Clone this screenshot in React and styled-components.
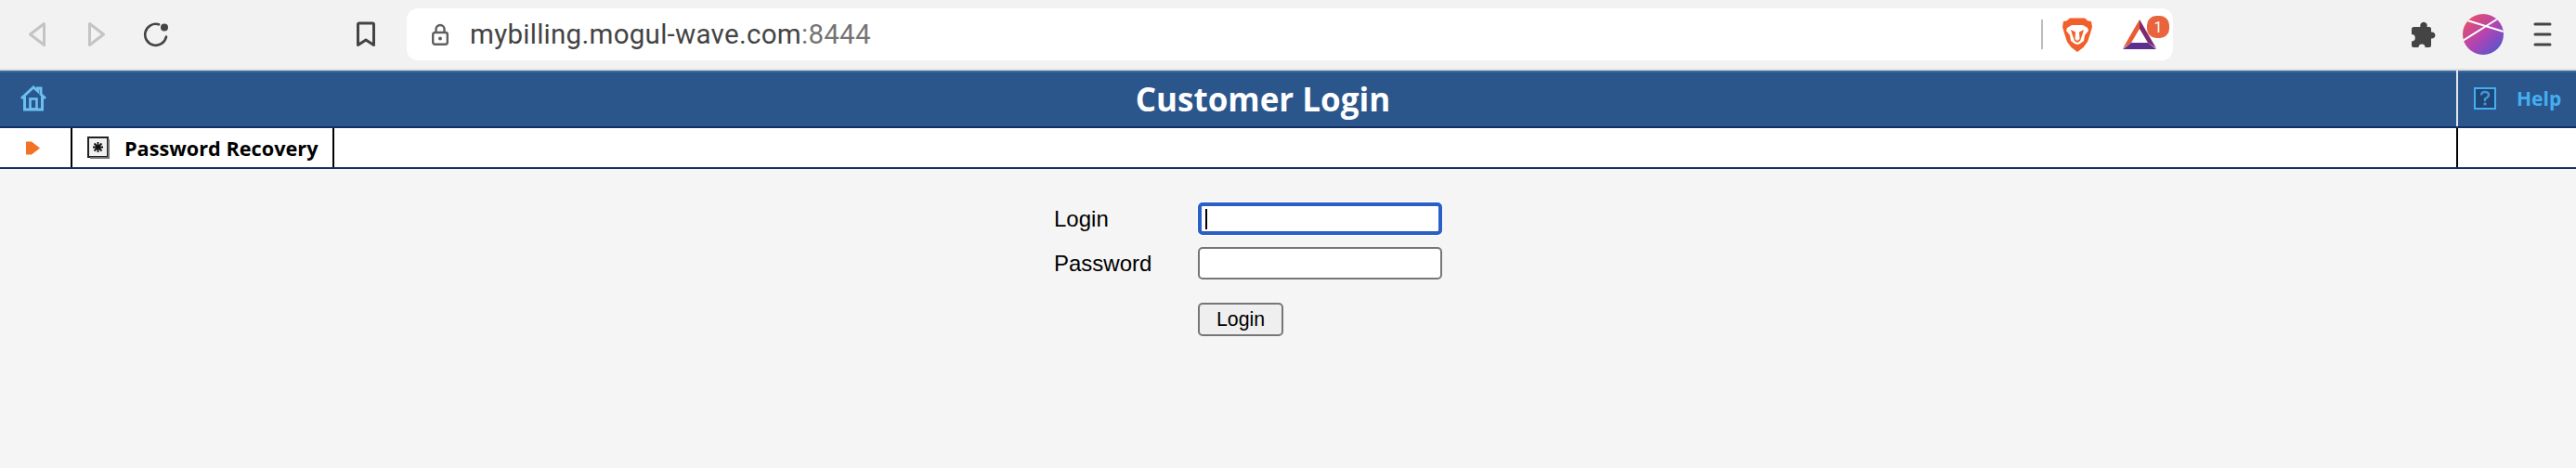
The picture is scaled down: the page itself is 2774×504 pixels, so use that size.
import React from "react";
import styled, { createGlobalStyle } from "styled-components";

const GlobalStyle = createGlobalStyle`
  html, body {
    margin: 0;
    padding: 0;
    background: #f5f5f5;
  }
  * {
    box-sizing: border-box;
  }
`;

const Page = styled.div`
  min-height: 100vh;
  display: flex;
  flex-direction: column;
  background: #f5f5f5;
  font-family: "Liberation Sans", Arial, sans-serif;
  color: #000;
`;

const Toolbar = styled.div`
  height: 76px;
  flex: none;
  display: flex;
  align-items: center;
  padding: 0 0 0 8px;
  background: #f2f2f2;
  border-bottom: 2px solid #dedede;
`;

const ToolButton = styled.div`
  width: 64px;
  height: 56px;
  flex: none;
  display: flex;
  align-items: center;
  justify-content: center;
  margin-left: ${props => props.$gap || 0}px;
`;

const UrlBar = styled.div`
  width: 1902px;
  height: 56px;
  margin-left: 12px;
  flex: none;
  display: flex;
  align-items: center;
  padding-left: 27px;
  background: #fff;
  border-radius: 12px;
`;

const Url = styled.span`
  margin-left: 23px;
  font-family: Roboto, "Liberation Sans", sans-serif;
  font-size: 29.5px;
  letter-spacing: 0.28px;
  color: #444;
  flex: 1;
`;

const Port = styled.span`
  color: #757575;
`;

const UrlDivider = styled.div`
  width: 2px;
  height: 32px;
  background: #bdbdbd;
  flex: none;
`;

const ShieldSlot = styled.div`
  width: 32px;
  height: 37px;
  margin-left: 21px;
  flex: none;
`;

const RewardsSlot = styled.div`
  position: relative;
  width: 36px;
  height: 32px;
  margin: 0 18px 0 33px;
  flex: none;
`;

const Badge = styled.div`
  position: absolute;
  left: 26px;
  top: -4px;
  width: 24px;
  height: 24px;
  border-radius: 10px;
  display: flex;
  align-items: center;
  justify-content: center;
  background: #e9633c;
  color: #fff;
  font-family: Roboto, sans-serif;
  font-size: 16px;
`;

const TitleBar = styled.div`
  height: 62px;
  flex: none;
  display: flex;
  background: #2a568c;
  border-top: 2px solid #3a6a9f;
  border-bottom: 2px solid #122f68;
`;

const HomeCell = styled.div`
  width: 78px;
  flex: none;
  padding: 13px 0 0 21px;
`;

const Title = styled.h1`
  flex: 1;
  margin: 0;
  padding-right: 3px;
  text-align: center;
  font-family: "Open Sans", sans-serif;
  font-size: 35px;
  line-height: 58px;
  font-weight: 700;
  color: #fff;
`;

const HelpCell = styled.div`
  width: 129px;
  flex: none;
  margin-top: -2px;
  display: flex;
  align-items: center;
  padding-left: 17px;
  border-left: 2px solid #e4e8ee;
`;

const HelpText = styled.span`
  margin-left: 22px;
  font-family: "Open Sans", sans-serif;
  font-size: 21px;
  font-weight: 700;
  color: #45aef0;
`;

const MenuRow = styled.div`
  height: 44px;
  flex: none;
  display: flex;
  background: #fff;
  border-bottom: 2px solid #122f68;
`;

const MenuCell = styled.div`
  flex: ${props => (props.$grow ? 1 : "none")};
  width: ${props => props.$width}px;
  display: flex;
  align-items: center;
  padding-left: ${props => props.$pad || 0}px;
  border-right: ${props => (props.$open ? "none" : "2px solid #000")};
`;

const MenuText = styled.span`
  margin-left: 16px;
  font-family: "Open Sans", sans-serif;
  font-size: 21.7px;
  font-weight: 700;
  white-space: nowrap;
`;

const Form = styled.form`
  display: grid;
  grid-template-columns: 155px 263px;
  grid-template-rows: 35px 35px 48px;
  row-gap: 13px;
  align-items: end;
  margin: 36px 0 0 1135px;
  font-size: 24px;

  label {
    align-self: center;
  }
`;

const FieldWrap = styled.div`
  position: relative;
  height: 35px;
`;

const Field = styled.input`
  display: block;
  width: 263px;
  height: 35px;
  padding: 0 6px;
  background: #fff;
  border: ${props => (props.$focused ? "4px solid #2a5fc8" : "2px solid #767676")};
  border-radius: 5px;
  box-shadow: ${props => (props.$focused ? "0 0 0 1px #fff" : "none")};
  outline: none;
`;

const Caret = styled.div`
  position: absolute;
  left: 8px;
  top: 7px;
  width: 2px;
  height: 22px;
  background: #000;
`;

const SubmitButton = styled.button`
  grid-column: 2;
  width: 92px;
  height: 36px;
  padding: 0;
  background: #efefef;
  border: 2px solid #767676;
  border-radius: 5px;
  font-family: "Liberation Sans", Arial, sans-serif;
  font-size: 21.3px;
  color: #000;
`;

const BackIcon = ({ flip }) => (
  <svg width="20" height="28" viewBox="0 0 20 28" style={flip ? { transform: "scaleX(-1)" } : undefined}>
    <path d="M17.5 2.5 L2.5 14 L17.5 25.5 Z" fill="none" stroke="#c4c4c4" strokeWidth="3" strokeLinejoin="round" />
  </svg>
);

const ReloadIcon = () => (
  <svg width="28" height="28" viewBox="0 0 28 28">
    <path d="M25 16.5 A11.5 11.5 0 1 1 17 3.3" fill="none" stroke="#444" strokeWidth="2.6" strokeLinecap="round" />
    <circle cx="23" cy="6.5" r="4" fill="#444" />
  </svg>
);

const BookmarkIcon = () => (
  <svg width="22" height="28" viewBox="0 0 22 28">
    <path d="M2.5 3.5 Q2.5 2 4 2 H18 Q19.5 2 19.5 3.5 V25.5 L11 20 L2.5 25.5 Z" fill="none" stroke="#444" strokeWidth="3" strokeLinejoin="round" />
  </svg>
);

const LockIcon = () => (
  <svg width="18" height="24" viewBox="0 0 18 24" style={{ flex: "none" }}>
    <path d="M4.5 10 V6.5 A4.5 4.5 0 0 1 13.5 6.5 V10" fill="none" stroke="#5f5f5f" strokeWidth="2.4" />
    <rect x="1.2" y="10" width="15.6" height="12.8" rx="2.2" fill="none" stroke="#5f5f5f" strokeWidth="2.4" />
    <circle cx="9" cy="16.4" r="2" fill="#5f5f5f" />
  </svg>
);

const LionIcon = () => (
  <svg width="32" height="37" viewBox="0 0 32 37">
    <path d="M8 0.5 H24 L27.5 3.5 L31 4 L32 10 L30 17 L27 26 L22.5 32 L16 37 L9.5 32 L5 26 L2 17 L0 10 L1 4 L4.5 3.5 Z" fill="#f1602a" />
    <path d="M5 11 L10 8 H22 L27 11 L28 14 L24 19 L23 25 L19 28 L16 29 L13 28 L9 25 L8 19 L4 14 Z" fill="#fff" />
    <path d="M9 13 L14 15.5 L13.5 23 L16 25 L18.5 23 L18 15.5 L23 13 L21.5 18 L19 25 L16 27 L13 25 L10.5 18 Z" fill="#f1602a" />
  </svg>
);

const RewardsIcon = () => (
  <svg width="36" height="32" viewBox="0 0 36 32">
    <path d="M18 0 L36 31 L27 25 L18 10 Z" fill="#7e2a72" />
    <path d="M18 0 L18 10 L9 25 L0 31 Z" fill="#ea5b34" />
    <path d="M9 25 H27 L36 32 H0 Z" fill="#5e2f8f" />
  </svg>
);

const PuzzleIcon = () => (
  <svg width="28" height="30" viewBox="0 0 28 30">
    <path d="M4 7 H10.5 A3.8 3.8 0 1 1 17.5 7 H20 Q22 7 22 9 V12.5 A3.6 3.6 0 1 1 22 19.5 V27 Q22 29 20 29 H15.5 A3.4 3.4 0 1 0 8.5 29 H3 Q1 29 1 27 V22.5 A3.6 3.6 0 1 0 1 15 V9 Q1 7 4 7 Z" fill="#444" />
  </svg>
);

const Avatar = () => (
  <svg width="44" height="44" viewBox="0 0 44 44">
    <defs>
      <linearGradient id="avatarFill" x1="0.1" y1="0.1" x2="0.85" y2="0.9">
        <stop offset="0" stopColor="#e8506a" />
        <stop offset="0.55" stopColor="#b044b4" />
        <stop offset="1" stopColor="#5a55cc" />
      </linearGradient>
      <clipPath id="avatarClip">
        <circle cx="22" cy="22" r="22" />
      </clipPath>
    </defs>
    <circle cx="22" cy="22" r="22" fill="url(#avatarFill)" />
    <g clipPath="url(#avatarClip)" stroke="#fff" strokeWidth="2" fill="none">
      <path d="M5 7 L44 19" />
      <path d="M0 29 L38 5" />
    </g>
  </svg>
);

const MenuIcon = () => (
  <svg width="20" height="28" viewBox="0 0 20 28">
    <path d="M2 3 H18 M2 14 H18 M2 25 H18" stroke="#444" strokeWidth="3" strokeLinecap="round" />
  </svg>
);

const HomeIcon = () => (
  <svg width="30" height="30" viewBox="0 0 30 30">
    <path d="M2 15 L15 3 L19.5 7 V4 H23 V10.5 L28 15" fill="none" stroke="#6cc0ef" strokeWidth="3" />
    <path d="M5.5 13 V27 H24.5 V13" fill="none" stroke="#6cc0ef" strokeWidth="3" />
    <rect x="11.5" y="15.5" width="7" height="11" fill="none" stroke="#6cc0ef" strokeWidth="2.6" />
  </svg>
);

const ArrowIcon = () => (
  <svg width="15" height="15" viewBox="0 0 15 15">
    <path d="M0 0.5 H6 L15 7.5 L6 14.5 H0 Z" fill="#f37224" />
  </svg>
);

const RecoveryIcon = () => (
  <svg width="24" height="24" viewBox="0 0 24 24" style={{ flex: "none" }}>
    <rect x="1" y="1" width="21" height="21" fill="#f1f1f1" stroke="#222" strokeWidth="2" />
    <path d="M23 3 V23 H3" fill="none" stroke="#777" strokeWidth="2" />
    <path d="M11.5 6 V17 M6 11.5 H17 M7.5 7.5 L15.5 15.5 M15.5 7.5 L7.5 15.5" stroke="#111" strokeWidth="1.8" />
  </svg>
);

const HelpIcon = () => (
  <svg width="24" height="24" viewBox="0 0 24 24" style={{ flex: "none" }}>
    <rect x="1" y="1" width="22" height="22" fill="#1e4677" stroke="#45aef0" strokeWidth="2" />
    <path d="M8 8.5 Q8 5 12 5 Q16 5 16 8.3 Q16 10.5 12 12.5 V15" fill="none" stroke="#4596d6" strokeWidth="2.4" />
    <rect x="10.6" y="16.5" width="2.8" height="2.8" fill="#4596d6" />
  </svg>
);

export default function App() {
  return (
    <Page>
      <GlobalStyle />
      <Toolbar>
        <ToolButton><BackIcon /></ToolButton>
        <ToolButton><BackIcon flip /></ToolButton>
        <ToolButton><ReloadIcon /></ToolButton>
        <ToolButton $gap={162}><BookmarkIcon /></ToolButton>
        <UrlBar>
          <LockIcon />
          <Url>mybilling.mogul-wave.com<Port>:8444</Port></Url>
          <UrlDivider />
          <ShieldSlot><LionIcon /></ShieldSlot>
          <RewardsSlot>
            <RewardsIcon />
            <Badge>1</Badge>
          </RewardsSlot>
        </UrlBar>
        <ToolButton $gap={238}><PuzzleIcon /></ToolButton>
        <ToolButton><Avatar /></ToolButton>
        <ToolButton><MenuIcon /></ToolButton>
      </Toolbar>
      <TitleBar>
        <HomeCell><HomeIcon /></HomeCell>
        <Title>Customer Login</Title>
        <HelpCell>
          <HelpIcon />
          <HelpText>Help</HelpText>
        </HelpCell>
      </TitleBar>
      <MenuRow>
        <MenuCell $width={78} $pad={28}><ArrowIcon /></MenuCell>
        <MenuCell $width={282} $pad={16}>
          <RecoveryIcon />
          <MenuText>Password Recovery</MenuText>
        </MenuCell>
        <MenuCell $grow />
        <MenuCell $width={127} $open />
      </MenuRow>
      <Form onSubmit={e => e.preventDefault()}>
        <label>Login</label>
        <FieldWrap>
          <Field $focused readOnly />
          <Caret />
        </FieldWrap>
        <label>Password</label>
        <FieldWrap>
          <Field type="password" readOnly />
        </FieldWrap>
        <SubmitButton type="submit">Login</SubmitButton>
      </Form>
    </Page>
  );
}
